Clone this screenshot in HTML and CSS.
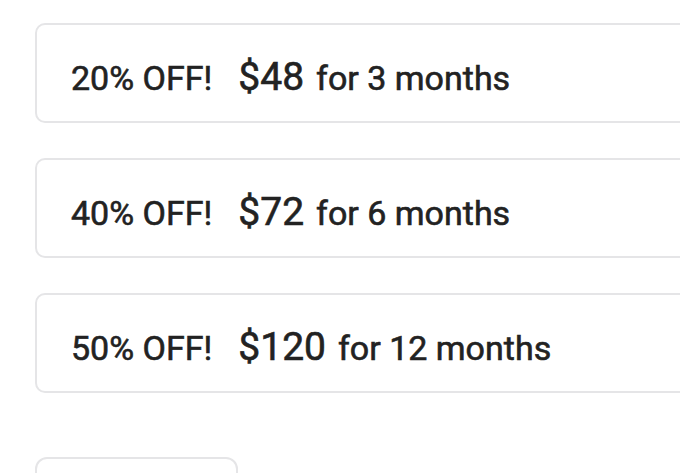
FILE: index.html
```html
<!DOCTYPE html>
<html>
<head>
<meta charset="utf-8">
<link rel="stylesheet" href="styles.css">
</head>
<body>
<div class="list">
  <div class="card"><span class="off">20% OFF!</span><span class="price">$48</span><span class="term">for 3 months</span></div>
  <div class="card"><span class="off">40% OFF!</span><span class="price">$72</span><span class="term">for 6 months</span></div>
  <div class="card"><span class="off">50% OFF!</span><span class="price">$120</span><span class="term">for 12 months</span></div>
  <div class="card small"></div>
</div>
</body>
</html>
```
FILE: styles.css
```css
html, body {
  margin: 0;
  padding: 0;
  background: #ffffff;
  overflow: hidden;
}
body {
  width: 680px;
  height: 473px;
  font-family: Roboto, "Liberation Sans", sans-serif;
  color: #222222;
}
.list {
  padding: 23px 0 0 35px;
  display: flex;
  flex-direction: column;
  gap: 35px;
}
.card {
  box-sizing: border-box;
  width: 700px;
  height: 100px;
  border: 2px solid #e5e5e7;
  border-radius: 10px;
  display: flex;
  align-items: baseline;
  padding: 36px 0 0 34px;
  white-space: nowrap;
}
.card.small {
  width: 203px;
  border-radius: 12px;
  margin-top: 29px;
}
.off,
.price,
.term {
  font-weight: 400;
  line-height: 32px;
  -webkit-text-stroke: 0.6px #222222;
}
.off {
  font-size: 34px;
  margin-right: 26px;
}
.price {
  font-size: 39px;
  margin-right: 12px;
}
.term {
  font-size: 34px;
}
```
